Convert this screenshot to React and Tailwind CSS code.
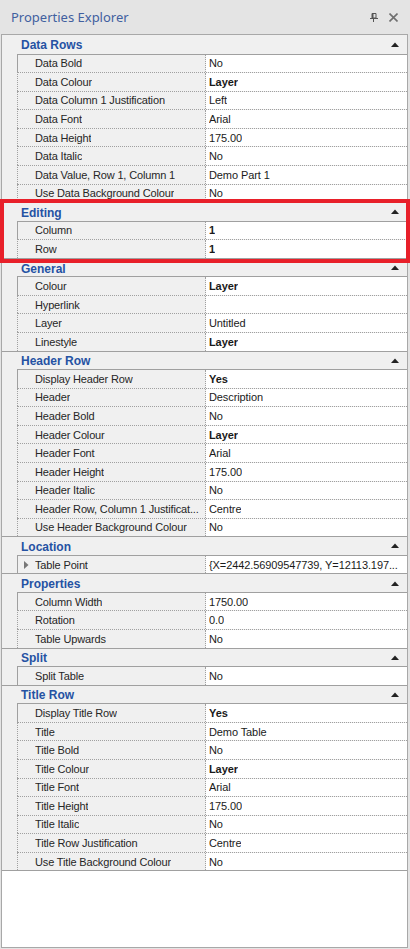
import React from 'react';

const groups = [
  {
    name: 'Data Rows',
    items: [
      ['Data Bold', 'No'],
      ['Data Colour', 'Layer', true],
      ['Data Column 1 Justification', 'Left'],
      ['Data Font', 'Arial'],
      ['Data Height', '175.00'],
      ['Data Italic', 'No'],
      ['Data Value, Row 1, Column 1', 'Demo Part 1'],
      ['Use Data Background Colour', 'No'],
    ],
  },
  { name: 'Editing', items: [['Column', '1', true], ['Row', '1', true]] },
  {
    name: 'General',
    items: [
      ['Colour', 'Layer', true],
      ['Hyperlink', ''],
      ['Layer', 'Untitled'],
      ['Linestyle', 'Layer', true],
    ],
  },
  {
    name: 'Header Row',
    items: [
      ['Display Header Row', 'Yes', true],
      ['Header', 'Description'],
      ['Header Bold', 'No'],
      ['Header Colour', 'Layer', true],
      ['Header Font', 'Arial'],
      ['Header Height', '175.00'],
      ['Header Italic', 'No'],
      ['Header Row, Column 1 Justificat...', 'Centre'],
      ['Use Header Background Colour', 'No'],
    ],
  },
  { name: 'Location', items: [['Table Point', '{X=2442.56909547739, Y=12113.197...', false, true]] },
  {
    name: 'Properties',
    items: [
      ['Column Width', '1750.00'],
      ['Rotation', '0.0'],
      ['Table Upwards', 'No'],
    ],
  },
  { name: 'Split', items: [['Split Table', 'No']] },
  {
    name: 'Title Row',
    items: [
      ['Display Title Row', 'Yes', true],
      ['Title', 'Demo Table'],
      ['Title Bold', 'No'],
      ['Title Colour', 'Layer', true],
      ['Title Font', 'Arial'],
      ['Title Height', '175.00'],
      ['Title Italic', 'No'],
      ['Title Row Justification', 'Centre'],
      ['Use Title Background Colour', 'No'],
    ],
  },
];

function CategoryRow({ name, first }) {
  return (
    <div className={`flex h-[18.57px] items-center justify-between bg-[#f0f0f0] pl-[19px] pr-[8px] ${first ? '' : 'border-t border-[#a0a0a0]'}`}>
      <span className="pt-[2px] text-[12px] font-bold leading-none text-[#2552a3]">{name}</span>
      <svg width="8" height="5" viewBox="0 0 8 5"><path d="M0 5 L4 0.5 L8 5 Z" fill="#222" /></svg>
    </div>
  );
}

function ItemRow({ label, value, bold, expandable, first }) {
  return (
    <div className="flex h-[18.57px] bg-[#f0f0f0]">
      <div className="w-[15px] shrink-0" />
      <div className={`flex flex-1 border-l border-[#a0a0a0] ${first ? 'border-t border-t-[#a0a0a0]' : 'border-t border-dotted border-t-[#a0a0a0]'}`}>
        <div className="relative flex w-[188px] shrink-0 items-center border-r border-dotted border-r-[#a0a0a0] pl-[17px] pr-[2px] pt-[1px]">
          {expandable && (
            <svg className="absolute left-[6px] top-[5px]" width="5" height="8" viewBox="0 0 5 8"><path d="M0 0 L4.5 4 L0 8 Z" fill="#777" /></svg>
          )}
          <span className="truncate text-[11px] leading-none tracking-[-0.15px] text-[#262626]">{label}</span>
        </div>
        <div className="flex min-w-0 flex-1 items-center bg-white pl-[3px] pr-[2px] pt-[1px]">
          <span className={`overflow-hidden whitespace-nowrap text-[11px] leading-none tracking-[-0.1px] text-[#1a1a1a] ${bold ? 'font-bold' : ''}`}>{value}</span>
        </div>
      </div>
    </div>
  );
}

export default function App() {
  return (
    <div className="relative flex h-[949px] w-[410px] flex-col bg-[#e4e4e4] font-['Liberation_Sans',Arial,sans-serif]">
      <div className="flex h-[34px] shrink-0 items-center justify-between pl-[11px] pr-[12px]">
        <span className="font-['Noto_Sans',sans-serif] text-[13px] leading-none text-[#41609f]">Properties Explorer</span>
        <div className="flex items-center gap-[11px]">
          <svg width="8" height="9" viewBox="0 0 8 9">
            <path d="M2 0.5 H6 V5 H2 Z" fill="none" stroke="#555" strokeWidth="1" />
            <rect x="2" y="0" width="1.5" height="5" fill="#555" />
            <path d="M0 5.5 H8" stroke="#555" strokeWidth="1" />
            <path d="M3.5 5.5 V9" stroke="#555" strokeWidth="1" />
          </svg>
          <svg width="9" height="9" viewBox="0 0 9 9">
            <path d="M0.5 0.5 L8.5 8.5 M8.5 0.5 L0.5 8.5" stroke="#6f6f6f" strokeWidth="1.6" />
          </svg>
        </div>
      </div>
      <div className="mb-[1px] ml-[1px] mr-[2px] flex flex-1 flex-col border border-[#a8a8a8] bg-white">
        <div className="border-b border-[#a0a0a0]">
          {groups.map((g, gi) => (
            <div key={g.name}>
              <CategoryRow name={g.name} first={gi === 0} />
              {g.items.map(([label, value, bold, expandable], i) => (
                <ItemRow key={label} label={label} value={value} bold={bold} expandable={expandable} first={i === 0} />
              ))}
            </div>
          ))}
        </div>
      </div>
      <div className="pointer-events-none absolute left-0 top-[199px] h-[64px] w-[410px] border-4 border-[#e8202a]" />
    </div>
  );
}
